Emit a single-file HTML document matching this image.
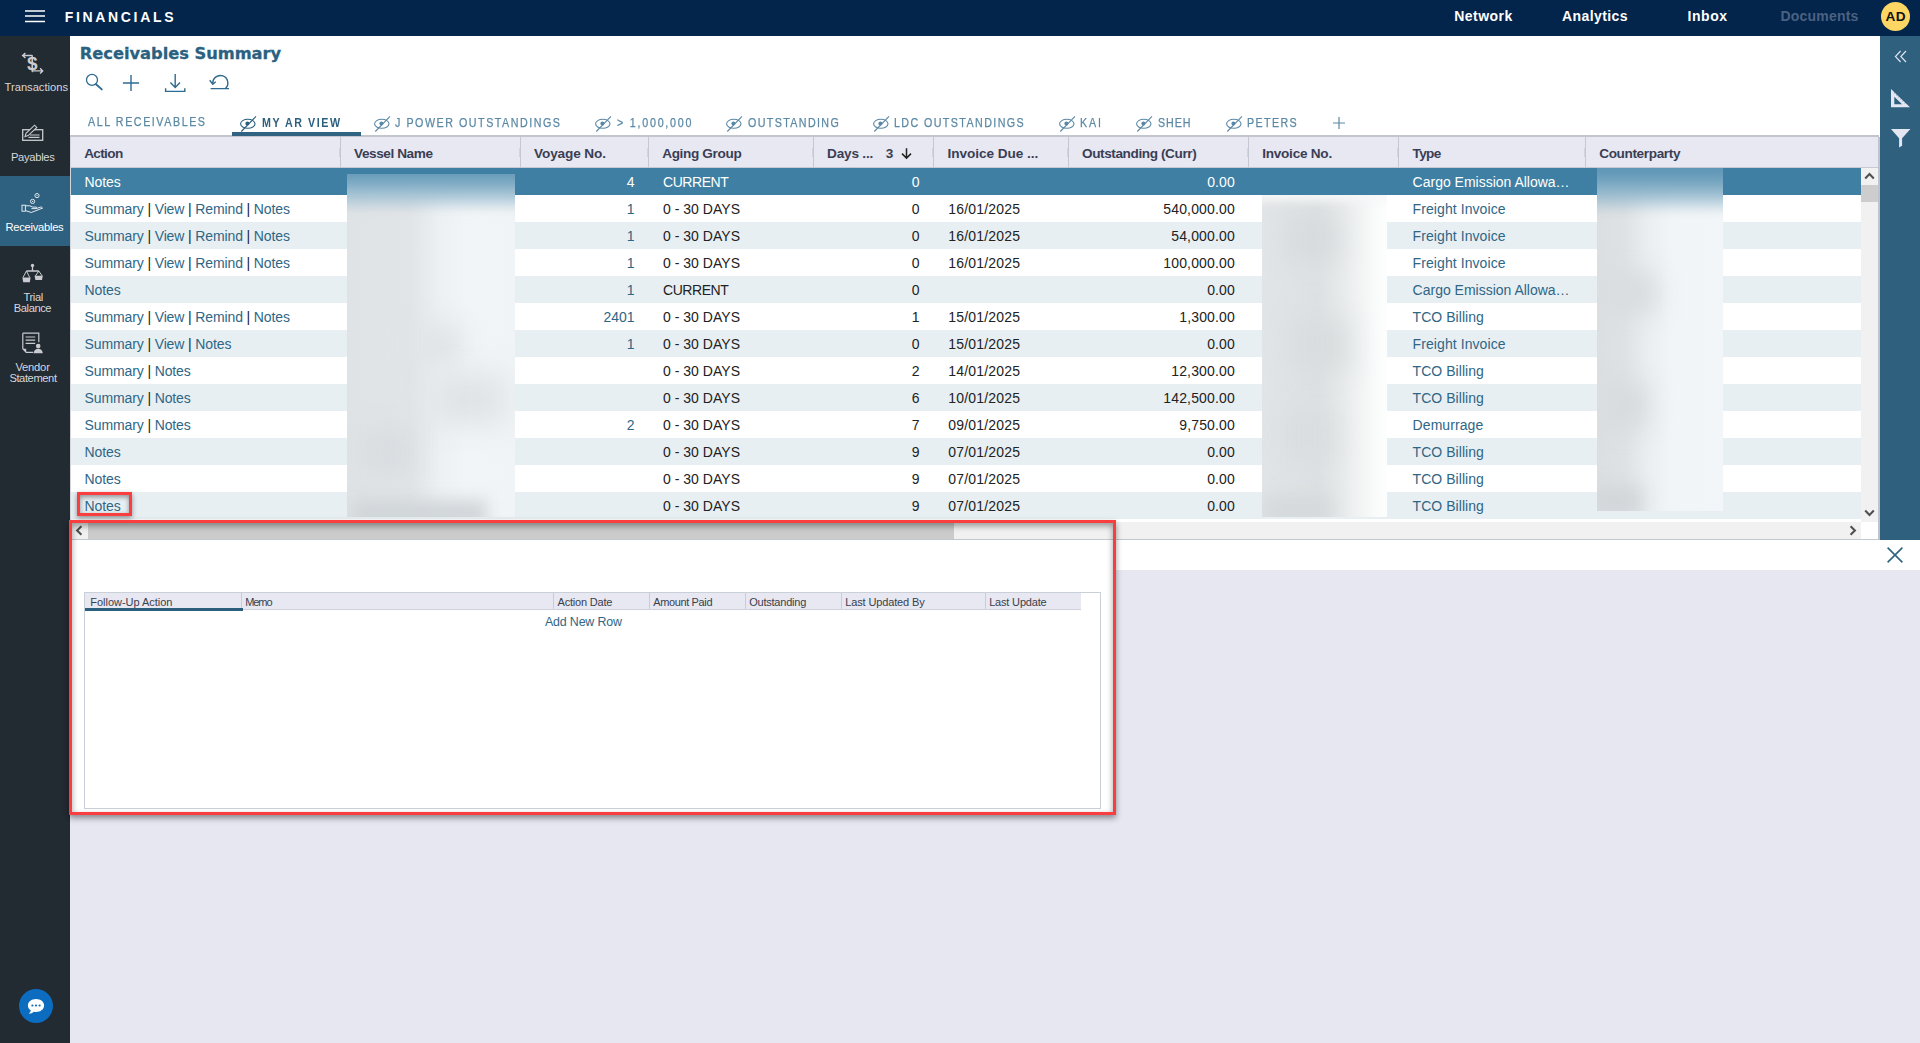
<!DOCTYPE html>
<html lang="en">
<head>
<meta charset="utf-8">
<title>Receivables Summary</title>
<style>
*{box-sizing:border-box;margin:0;padding:0}
html,body{width:1920px;height:1043px;overflow:hidden;background:#e6e7f1;font-family:"Liberation Sans",Arial,sans-serif;}
body{position:relative}
.t{position:absolute;white-space:pre;line-height:1}
.b{position:absolute}
svg{position:absolute;overflow:visible}
/* top bar */
#top{position:absolute;left:0;top:0;width:1920px;height:36px;background:#03244b}
#avatar{position:absolute;left:1881px;top:2px;width:28px;height:28px;border-radius:50%;background:#fdd663}
/* sidebar */
#side{position:absolute;left:0;top:36px;width:70px;height:1007px;background:#222a32}
#sideact{position:absolute;left:0;top:176px;width:70px;height:70px;background:#2e617f}
/* main */
#main{position:absolute;left:70px;top:36px;width:1810px;height:504px;background:#fff}
/* grid */
#gridtop{position:absolute;left:70px;top:135px;width:1809px;height:2px;background:#c3c5cd}
#ghead{position:absolute;left:70px;top:137px;width:1809px;height:31px;background:#e7e8f1;border-bottom:1px solid #c6c9d1;border-left:1px solid #cfd2da;border-right:1px solid #c3c5cd}
.hs{position:absolute;top:137px;width:1px;height:30px;background:#c5c8d2}
.hs2{position:absolute;top:148px;width:1.4px;height:9px;background:#d3d5de}
.r{position:absolute;left:71px;width:1790px;height:27px;background:#fff}
.r.alt{background:#e8eff3}
.r.sel{background:#3e7fa3}
/* right panel */
#right{position:absolute;left:1880px;top:36px;width:40px;height:504px;background:#2f617e}
/* lower */
#lower{position:absolute;left:70px;top:540px;width:1850px;height:30px;background:#fff}
</style>
</head>
<body>
<div id="top"></div>
<svg style="left:25px;top:10px" width="20" height="14" viewBox="0 0 20 14"><path d="M0 0.9h20M0 6.1h20M0 11.4h20" stroke="#fff" stroke-width="1.5" fill="none"/></svg>
<div class="t" style="top:10.35px;font-size:14px;color:#fff;font-weight:bold;letter-spacing:2.669px;left:64.7px;">FINANCIALS</div>
<div class="t" style="top:9.45px;font-size:14px;color:#fff;font-weight:bold;letter-spacing:0.461px;left:1454.3px;">Network</div>
<div class="t" style="top:9.45px;font-size:14px;color:#fff;font-weight:bold;letter-spacing:0.419px;left:1562px;">Analytics</div>
<div class="t" style="top:9.45px;font-size:14px;color:#fff;font-weight:bold;letter-spacing:0.564px;left:1687.5px;">Inbox</div>
<div class="t" style="top:9.45px;font-size:14px;color:#4a6282;font-weight:bold;letter-spacing:0.208px;left:1780.5px;">Documents</div>
<div id="avatar" style="left:1880.5px;top:2px;width:29px;height:29px"></div>
<div class="t" style="top:9.69px;font-size:13.6px;color:#111;font-weight:bold;letter-spacing:0.659px;left:1885.4px;">AD</div>
<div id="side"></div>
<div id="sideact"></div>
<div class="t" style="top:81.52px;font-size:11.2px;color:#d6d8dc;letter-spacing:-0.022px;left:4.6px;">Transactions</div>
<div class="t" style="top:152.02px;font-size:11.2px;color:#d6d8dc;letter-spacing:-0.29px;left:10.9px;">Payables</div>
<div class="t" style="top:222.02px;font-size:11.2px;color:#fff;letter-spacing:-0.265px;left:5.4px;">Receivables</div>
<div class="t" style="top:292.02px;font-size:11.2px;color:#d6d8dc;letter-spacing:-0.411px;left:23.5px;">Trial</div>
<div class="t" style="top:303.02px;font-size:11.2px;color:#d6d8dc;letter-spacing:-0.44px;left:13.8px;">Balance</div>
<div class="t" style="top:362.02px;font-size:11.2px;color:#d6d8dc;letter-spacing:-0.194px;left:15.4px;">Vendor</div>
<div class="t" style="top:373.02px;font-size:11.2px;color:#d6d8dc;letter-spacing:-0.425px;left:9.4px;">Statement</div>
<svg style="left:22px;top:52px" width="22" height="22" viewBox="0 0 22 22"><text x="4.9" y="17.9" style="font:bold 19px 'Liberation Sans',sans-serif" fill="#c9cbd0">$</text><path d="M0.6 3.5H10.3M3.4 0.9L0.6 3.5L3.4 6.1M10.25 3.2V19.4" stroke="#c9cbd0" stroke-width="1.4" fill="none"/><path d="M10.3 18.9H20.7M18.1 16.3L20.7 18.9L18.1 21.5" stroke="#c9cbd0" stroke-width="1.4" fill="none"/></svg>
<svg style="left:22px;top:124px" width="22" height="18" viewBox="0 0 22 18"><rect x="0.7" y="5.7" width="20" height="10.6" fill="none" stroke="#c9cbd0" stroke-width="1.3"/><path d="M8 11h9.6M6.5 13.4h11" stroke="#c9cbd0" stroke-width="1.1" fill="none"/><path d="M3 12.6l1-3.2l8.6-8.2l2.2 2.2l-8.6 8.2z" fill="#222a32" stroke="#c9cbd0" stroke-width="1.1"/></svg>
<svg style="left:21px;top:192px" width="23" height="22" viewBox="0 0 23 22"><circle cx="16" cy="3.6" r="2.1" fill="none" stroke="#e3e8ee" stroke-width="1"/><circle cx="16" cy="3.6" r="0.6" fill="#e3e8ee"/><circle cx="11.6" cy="9.4" r="2.1" fill="none" stroke="#e3e8ee" stroke-width="1"/><circle cx="11.6" cy="9.4" r="0.6" fill="#e3e8ee"/><rect x="1" y="13.2" width="3.4" height="6" fill="none" stroke="#e3e8ee" stroke-width="1"/><path d="M4.6 13.8h4.2l3 1.3h3.6v1.5h-5M4.6 18.6l5.6 1.9l11.4-4.4l-1.4-1.2l-5 1.7" fill="none" stroke="#e3e8ee" stroke-width="1"/></svg>
<svg style="left:22px;top:263px" width="22" height="20" viewBox="0 0 22 20"><circle cx="10.5" cy="2.4" r="1.7" fill="#c9cbd0"/><path d="M10.5 3v5M4.4 8h12.4" stroke="#c9cbd0" stroke-width="1.3" fill="none"/><path d="M4.4 8L1 14.6M4.4 8l3.4 6.6M16.8 8l-3.4 5M16.8 8l3.4 5" stroke="#c9cbd0" stroke-width="1" fill="none"/><path d="M0.4 14.6h8.2l-0.8 4.6h-6.6z" fill="#c9cbd0"/><path d="M12.6 12.8h8.2l-0.8 4.2h-6.6z" fill="#c9cbd0"/></svg>
<svg style="left:22px;top:332px" width="22" height="22" viewBox="0 0 22 22"><path d="M0.8 1.2h16v9M0.8 1.2v15.6l3.4 3.6h7" fill="none" stroke="#c9cbd0" stroke-width="1.2"/><path d="M0.8 16.8h3.4v3.6z" fill="#c9cbd0"/><path d="M3.6 5h9.6M3.6 8.2h9.6M3.6 11.4h9.6" stroke="#c9cbd0" stroke-width="1.2" fill="none"/><circle cx="16.2" cy="14" r="2.3" fill="#c9cbd0"/><path d="M11.6 21.2c0.6-3.4 2.6-4.4 4.6-4.4s4 1 4.6 4.4z" fill="#c9cbd0"/></svg>
<div id="main"></div>
<div class="t" style="top:46.2px;font-size:16.3px;color:#2a6181;font-weight:bold;font-family:'DejaVu Sans','Liberation Sans',sans-serif;letter-spacing:-0.032px;left:79.8px;-webkit-text-stroke:0.3px #2a6181;">Receivables Summary</div>
<svg style="left:84px;top:72px" width="20" height="20" viewBox="0 0 20 20"><circle cx="8" cy="7.9" r="5.5" fill="none" stroke="#2f6b90" stroke-width="1.3"/><path d="M12 12.2L17.8 17.4" stroke="#2f6b90" stroke-width="1.9" fill="none" stroke-linecap="round"/></svg>
<svg style="left:122px;top:74px" width="18" height="18" viewBox="0 0 18 18"><path d="M9 0.9v16.2M0.9 9h16.2" stroke="#2f6b90" stroke-width="1.4" fill="none"/></svg>
<svg style="left:164px;top:73px" width="22" height="20" viewBox="0 0 22 20"><path d="M11.2 1v13.4M6.4 9.6l4.8 4.9l4.8-4.9M1.6 15.2v3.2h19.2v-3.2" stroke="#2f6b90" stroke-width="1.4" fill="none"/></svg>
<svg style="left:208px;top:73px" width="22" height="18" viewBox="0 0 22 18"><path d="M2.6 15.6H21M17.3 15.6A7.5 7.5 0 1 0 4.9 11M1.7 7.2L4.8 11.2L7.7 8.8" stroke="#2f6b90" stroke-width="1.4" fill="none"/></svg>
<div class="t" style="top:115.79px;font-size:12.3px;color:#5b88a5;letter-spacing:1.795px;left:88px;-webkit-text-stroke:0.25px #5b88a5;transform:scaleX(0.87);transform-origin:0 0;">ALL RECEIVABLES</div>
<svg style="left:239.8px;top:115px" width="17" height="17" viewBox="0 0 17 17"><ellipse cx="7.8" cy="8.8" rx="7.2" ry="4.5" fill="none" stroke="#2a5f7e" stroke-width="1.1"/><circle cx="7.4" cy="8.6" r="2" fill="#2a5f7e"/><path d="M1.3 16.5L16 1.4" stroke="#2a5f7e" stroke-width="1.1" fill="none"/></svg>
<div class="t" style="top:117.39px;font-size:12.3px;color:#2a5f7e;font-weight:bold;letter-spacing:1.762px;left:261.7px;transform:scaleX(0.87);transform-origin:0 0;">MY AR VIEW</div>
<svg style="left:374px;top:115px" width="17" height="17" viewBox="0 0 17 17"><ellipse cx="7.8" cy="8.8" rx="7.2" ry="4.5" fill="none" stroke="#5b88a5" stroke-width="1.1"/><circle cx="7.4" cy="8.6" r="2" fill="#5b88a5"/><path d="M1.3 16.5L16 1.4" stroke="#5b88a5" stroke-width="1.1" fill="none"/></svg>
<div class="t" style="top:117.39px;font-size:12.3px;color:#5b88a5;letter-spacing:1.759px;left:395px;-webkit-text-stroke:0.25px #5b88a5;transform:scaleX(0.87);transform-origin:0 0;">J POWER OUTSTANDINGS</div>
<svg style="left:595px;top:115px" width="17" height="17" viewBox="0 0 17 17"><ellipse cx="7.8" cy="8.8" rx="7.2" ry="4.5" fill="none" stroke="#5b88a5" stroke-width="1.1"/><circle cx="7.4" cy="8.6" r="2" fill="#5b88a5"/><path d="M1.3 16.5L16 1.4" stroke="#5b88a5" stroke-width="1.1" fill="none"/></svg>
<div class="t" style="top:117.39px;font-size:12.3px;color:#5b88a5;letter-spacing:2.032px;left:616.5px;-webkit-text-stroke:0.25px #5b88a5;transform:scaleX(0.87);transform-origin:0 0;">&gt; 1,000,000</div>
<svg style="left:725.8px;top:115px" width="17" height="17" viewBox="0 0 17 17"><ellipse cx="7.8" cy="8.8" rx="7.2" ry="4.5" fill="none" stroke="#5b88a5" stroke-width="1.1"/><circle cx="7.4" cy="8.6" r="2" fill="#5b88a5"/><path d="M1.3 16.5L16 1.4" stroke="#5b88a5" stroke-width="1.1" fill="none"/></svg>
<div class="t" style="top:117.39px;font-size:12.3px;color:#5b88a5;letter-spacing:1.577px;left:747.5px;-webkit-text-stroke:0.25px #5b88a5;transform:scaleX(0.87);transform-origin:0 0;">OUTSTANDING</div>
<svg style="left:873px;top:115px" width="17" height="17" viewBox="0 0 17 17"><ellipse cx="7.8" cy="8.8" rx="7.2" ry="4.5" fill="none" stroke="#5b88a5" stroke-width="1.1"/><circle cx="7.4" cy="8.6" r="2" fill="#5b88a5"/><path d="M1.3 16.5L16 1.4" stroke="#5b88a5" stroke-width="1.1" fill="none"/></svg>
<div class="t" style="top:117.39px;font-size:12.3px;color:#5b88a5;letter-spacing:1.618px;left:894.2px;-webkit-text-stroke:0.25px #5b88a5;transform:scaleX(0.87);transform-origin:0 0;">LDC OUTSTANDINGS</div>
<svg style="left:1058.7px;top:115px" width="17" height="17" viewBox="0 0 17 17"><ellipse cx="7.8" cy="8.8" rx="7.2" ry="4.5" fill="none" stroke="#5b88a5" stroke-width="1.1"/><circle cx="7.4" cy="8.6" r="2" fill="#5b88a5"/><path d="M1.3 16.5L16 1.4" stroke="#5b88a5" stroke-width="1.1" fill="none"/></svg>
<div class="t" style="top:117.39px;font-size:12.3px;color:#5b88a5;letter-spacing:2.155px;left:1080.3px;-webkit-text-stroke:0.25px #5b88a5;transform:scaleX(0.87);transform-origin:0 0;">KAI</div>
<svg style="left:1135.8px;top:115px" width="17" height="17" viewBox="0 0 17 17"><ellipse cx="7.8" cy="8.8" rx="7.2" ry="4.5" fill="none" stroke="#5b88a5" stroke-width="1.1"/><circle cx="7.4" cy="8.6" r="2" fill="#5b88a5"/><path d="M1.3 16.5L16 1.4" stroke="#5b88a5" stroke-width="1.1" fill="none"/></svg>
<div class="t" style="top:117.39px;font-size:12.3px;color:#5b88a5;letter-spacing:1.061px;left:1158.3px;-webkit-text-stroke:0.25px #5b88a5;transform:scaleX(0.87);transform-origin:0 0;">SHEH</div>
<svg style="left:1225.8px;top:115px" width="17" height="17" viewBox="0 0 17 17"><ellipse cx="7.8" cy="8.8" rx="7.2" ry="4.5" fill="none" stroke="#5b88a5" stroke-width="1.1"/><circle cx="7.4" cy="8.6" r="2" fill="#5b88a5"/><path d="M1.3 16.5L16 1.4" stroke="#5b88a5" stroke-width="1.1" fill="none"/></svg>
<div class="t" style="top:117.39px;font-size:12.3px;color:#5b88a5;letter-spacing:1.562px;left:1247.4px;-webkit-text-stroke:0.25px #5b88a5;transform:scaleX(0.87);transform-origin:0 0;">PETERS</div>
<svg style="left:1332.5px;top:116.7px" width="12" height="12" viewBox="0 0 12 12"><path d="M6 0v12M0 6h12" stroke="#5b88a5" stroke-width="1.2" fill="none"/></svg>
<div id="gridtop"></div>
<div id="ghead"></div>
<div class="b" style="left:232px;top:132px;width:129px;height:4px;background:#2f6381"></div>
<div class="hs" style="left:340px"></div>
<div class="hs2" style="left:338.6px"></div>
<div class="hs" style="left:520px"></div>
<div class="hs2" style="left:518.6px"></div>
<div class="hs" style="left:648px"></div>
<div class="hs2" style="left:646.6px"></div>
<div class="hs" style="left:813px"></div>
<div class="hs2" style="left:811.6px"></div>
<div class="hs" style="left:933px"></div>
<div class="hs2" style="left:931.6px"></div>
<div class="hs" style="left:1068px"></div>
<div class="hs2" style="left:1066.6px"></div>
<div class="hs" style="left:1248px"></div>
<div class="hs2" style="left:1246.6px"></div>
<div class="hs" style="left:1398px"></div>
<div class="hs2" style="left:1396.6px"></div>
<div class="hs" style="left:1585px"></div>
<div class="hs2" style="left:1583.6px"></div>
<div class="t" style="top:146.69px;font-size:13.6px;color:#3a3e55;font-weight:bold;letter-spacing:-0.659px;left:84.2px;">Action</div>
<div class="t" style="top:146.69px;font-size:13.6px;color:#3a3e55;font-weight:bold;letter-spacing:-0.414px;left:354px;">Vessel Name</div>
<div class="t" style="top:146.69px;font-size:13.6px;color:#3a3e55;font-weight:bold;letter-spacing:-0.115px;left:534px;">Voyage No.</div>
<div class="t" style="top:146.69px;font-size:13.6px;color:#3a3e55;font-weight:bold;letter-spacing:-0.356px;left:662.2px;">Aging Group</div>
<div class="t" style="top:146.69px;font-size:13.6px;color:#3a3e55;font-weight:bold;letter-spacing:-0.187px;left:827px;">Days ...</div>
<div class="t" style="top:146.69px;font-size:13.6px;color:#3a3e55;font-weight:bold;left:885.8px;">3</div>
<div class="t" style="top:146.69px;font-size:13.6px;color:#3a3e55;font-weight:bold;letter-spacing:-0.043px;left:947.5px;">Invoice Due ...</div>
<div class="t" style="top:146.69px;font-size:13.6px;color:#3a3e55;font-weight:bold;letter-spacing:-0.405px;left:1082px;">Outstanding (Curr)</div>
<div class="t" style="top:146.69px;font-size:13.6px;color:#3a3e55;font-weight:bold;letter-spacing:-0.252px;left:1262.2px;">Invoice No.</div>
<div class="t" style="top:146.69px;font-size:13.6px;color:#3a3e55;font-weight:bold;letter-spacing:-0.64px;left:1412.5px;">Type</div>
<div class="t" style="top:146.69px;font-size:13.6px;color:#3a3e55;font-weight:bold;letter-spacing:-0.369px;left:1599.2px;">Counterparty</div>
<svg style="left:901px;top:148px" width="11" height="11" viewBox="0 0 11 11"><path d="M5.5 0.3v9.6M1 5.6l4.5 4.5l4.5-4.5" stroke="#222" stroke-width="1.5" fill="none"/></svg>
<div class="r sel" style="top:168px"></div>
<div class="t" style="left:84.6px;top:174.85px;font-size:14px;color:#fff;letter-spacing:-0.125px">Notes</div>
<div class="t" style="top:174.85px;font-size:14px;color:#fff;right:1285.4px;">4</div>
<div class="t" style="top:174.85px;font-size:14px;color:#fff;letter-spacing:-0.442px;left:663.0px;">CURRENT</div>
<div class="t" style="top:174.85px;font-size:14px;color:#fff;right:1000.4px;">0</div>
<div class="t" style="top:174.85px;font-size:14px;color:#fff;letter-spacing:0.117px;right:685.08px;">0.00</div>
<div class="t" style="top:174.85px;font-size:14px;color:#fff;letter-spacing:-0.008px;left:1412.6px;">Cargo Emission Allowa…</div>
<div class="r" style="top:195px"></div>
<div class="t" style="left:84.6px;top:201.85px;font-size:14px;color:#2f6685;letter-spacing:-0.125px">Summary <span style="color:#222">|</span> View <span style="color:#222">|</span> Remind <span style="color:#222">|</span> Notes</div>
<div class="t" style="top:201.85px;font-size:14px;color:#2f6685;right:1285.4px;">1</div>
<div class="t" style="top:201.85px;font-size:14px;color:#222;letter-spacing:0.022px;left:663.0px;">0 - 30 DAYS</div>
<div class="t" style="top:201.85px;font-size:14px;color:#222;right:1000.4px;">0</div>
<div class="t" style="top:201.85px;font-size:14px;color:#222;letter-spacing:0.191px;left:948.3px;">16/01/2025</div>
<div class="t" style="top:201.85px;font-size:14px;color:#222;letter-spacing:0.169px;right:685.03px;">540,000.00</div>
<div class="t" style="top:201.85px;font-size:14px;color:#2f6685;letter-spacing:0.077px;left:1412.6px;">Freight Invoice</div>
<div class="r alt" style="top:222px"></div>
<div class="t" style="left:84.6px;top:228.85px;font-size:14px;color:#2f6685;letter-spacing:-0.125px">Summary <span style="color:#222">|</span> View <span style="color:#222">|</span> Remind <span style="color:#222">|</span> Notes</div>
<div class="t" style="top:228.85px;font-size:14px;color:#2f6685;right:1285.4px;">1</div>
<div class="t" style="top:228.85px;font-size:14px;color:#222;letter-spacing:0.022px;left:663.0px;">0 - 30 DAYS</div>
<div class="t" style="top:228.85px;font-size:14px;color:#222;right:1000.4px;">0</div>
<div class="t" style="top:228.85px;font-size:14px;color:#222;letter-spacing:0.191px;left:948.3px;">16/01/2025</div>
<div class="t" style="top:228.85px;font-size:14px;color:#222;letter-spacing:0.163px;right:685.04px;">54,000.00</div>
<div class="t" style="top:228.85px;font-size:14px;color:#2f6685;letter-spacing:0.077px;left:1412.6px;">Freight Invoice</div>
<div class="r" style="top:249px"></div>
<div class="t" style="left:84.6px;top:255.85px;font-size:14px;color:#2f6685;letter-spacing:-0.125px">Summary <span style="color:#222">|</span> View <span style="color:#222">|</span> Remind <span style="color:#222">|</span> Notes</div>
<div class="t" style="top:255.85px;font-size:14px;color:#2f6685;right:1285.4px;">1</div>
<div class="t" style="top:255.85px;font-size:14px;color:#222;letter-spacing:0.022px;left:663.0px;">0 - 30 DAYS</div>
<div class="t" style="top:255.85px;font-size:14px;color:#222;right:1000.4px;">0</div>
<div class="t" style="top:255.85px;font-size:14px;color:#222;letter-spacing:0.191px;left:948.3px;">16/01/2025</div>
<div class="t" style="top:255.85px;font-size:14px;color:#222;letter-spacing:0.169px;right:685.03px;">100,000.00</div>
<div class="t" style="top:255.85px;font-size:14px;color:#2f6685;letter-spacing:0.077px;left:1412.6px;">Freight Invoice</div>
<div class="r alt" style="top:276px"></div>
<div class="t" style="left:84.6px;top:282.85px;font-size:14px;color:#2f6685;letter-spacing:-0.125px">Notes</div>
<div class="t" style="top:282.85px;font-size:14px;color:#2f6685;right:1285.4px;">1</div>
<div class="t" style="top:282.85px;font-size:14px;color:#222;letter-spacing:-0.442px;left:663.0px;">CURRENT</div>
<div class="t" style="top:282.85px;font-size:14px;color:#222;right:1000.4px;">0</div>
<div class="t" style="top:282.85px;font-size:14px;color:#222;letter-spacing:0.117px;right:685.08px;">0.00</div>
<div class="t" style="top:282.85px;font-size:14px;color:#2f6685;letter-spacing:-0.008px;left:1412.6px;">Cargo Emission Allowa…</div>
<div class="r" style="top:303px"></div>
<div class="t" style="left:84.6px;top:309.85px;font-size:14px;color:#2f6685;letter-spacing:-0.125px">Summary <span style="color:#222">|</span> View <span style="color:#222">|</span> Remind <span style="color:#222">|</span> Notes</div>
<div class="t" style="top:309.85px;font-size:14px;color:#2f6685;right:1285.4px;">2401</div>
<div class="t" style="top:309.85px;font-size:14px;color:#222;letter-spacing:0.022px;left:663.0px;">0 - 30 DAYS</div>
<div class="t" style="top:309.85px;font-size:14px;color:#222;right:1000.4px;">1</div>
<div class="t" style="top:309.85px;font-size:14px;color:#222;letter-spacing:0.191px;left:948.3px;">15/01/2025</div>
<div class="t" style="top:309.85px;font-size:14px;color:#222;letter-spacing:0.157px;right:685.04px;">1,300.00</div>
<div class="t" style="top:309.85px;font-size:14px;color:#2f6685;letter-spacing:0.05px;left:1412.6px;">TCO Billing</div>
<div class="r alt" style="top:330px"></div>
<div class="t" style="left:84.6px;top:336.85px;font-size:14px;color:#2f6685;letter-spacing:-0.125px">Summary <span style="color:#222">|</span> View <span style="color:#222">|</span> Notes</div>
<div class="t" style="top:336.85px;font-size:14px;color:#2f6685;right:1285.4px;">1</div>
<div class="t" style="top:336.85px;font-size:14px;color:#222;letter-spacing:0.022px;left:663.0px;">0 - 30 DAYS</div>
<div class="t" style="top:336.85px;font-size:14px;color:#222;right:1000.4px;">0</div>
<div class="t" style="top:336.85px;font-size:14px;color:#222;letter-spacing:0.191px;left:948.3px;">15/01/2025</div>
<div class="t" style="top:336.85px;font-size:14px;color:#222;letter-spacing:0.117px;right:685.08px;">0.00</div>
<div class="t" style="top:336.85px;font-size:14px;color:#2f6685;letter-spacing:0.077px;left:1412.6px;">Freight Invoice</div>
<div class="r" style="top:357px"></div>
<div class="t" style="left:84.6px;top:363.85px;font-size:14px;color:#2f6685;letter-spacing:-0.125px">Summary <span style="color:#222">|</span> Notes</div>
<div class="t" style="top:363.85px;font-size:14px;color:#222;letter-spacing:0.022px;left:663.0px;">0 - 30 DAYS</div>
<div class="t" style="top:363.85px;font-size:14px;color:#222;right:1000.4px;">2</div>
<div class="t" style="top:363.85px;font-size:14px;color:#222;letter-spacing:0.191px;left:948.3px;">14/01/2025</div>
<div class="t" style="top:363.85px;font-size:14px;color:#222;letter-spacing:0.163px;right:685.04px;">12,300.00</div>
<div class="t" style="top:363.85px;font-size:14px;color:#2f6685;letter-spacing:0.05px;left:1412.6px;">TCO Billing</div>
<div class="r alt" style="top:384px"></div>
<div class="t" style="left:84.6px;top:390.85px;font-size:14px;color:#2f6685;letter-spacing:-0.125px">Summary <span style="color:#222">|</span> Notes</div>
<div class="t" style="top:390.85px;font-size:14px;color:#222;letter-spacing:0.022px;left:663.0px;">0 - 30 DAYS</div>
<div class="t" style="top:390.85px;font-size:14px;color:#222;right:1000.4px;">6</div>
<div class="t" style="top:390.85px;font-size:14px;color:#222;letter-spacing:0.191px;left:948.3px;">10/01/2025</div>
<div class="t" style="top:390.85px;font-size:14px;color:#222;letter-spacing:0.169px;right:685.03px;">142,500.00</div>
<div class="t" style="top:390.85px;font-size:14px;color:#2f6685;letter-spacing:0.05px;left:1412.6px;">TCO Billing</div>
<div class="r" style="top:411px"></div>
<div class="t" style="left:84.6px;top:417.85px;font-size:14px;color:#2f6685;letter-spacing:-0.125px">Summary <span style="color:#222">|</span> Notes</div>
<div class="t" style="top:417.85px;font-size:14px;color:#2f6685;right:1285.4px;">2</div>
<div class="t" style="top:417.85px;font-size:14px;color:#222;letter-spacing:0.022px;left:663.0px;">0 - 30 DAYS</div>
<div class="t" style="top:417.85px;font-size:14px;color:#222;right:1000.4px;">7</div>
<div class="t" style="top:417.85px;font-size:14px;color:#222;letter-spacing:0.191px;left:948.3px;">09/01/2025</div>
<div class="t" style="top:417.85px;font-size:14px;color:#222;letter-spacing:0.157px;right:685.04px;">9,750.00</div>
<div class="t" style="top:417.85px;font-size:14px;color:#2f6685;letter-spacing:0.071px;left:1412.6px;">Demurrage</div>
<div class="r alt" style="top:438px"></div>
<div class="t" style="left:84.6px;top:444.85px;font-size:14px;color:#2f6685;letter-spacing:-0.125px">Notes</div>
<div class="t" style="top:444.85px;font-size:14px;color:#222;letter-spacing:0.022px;left:663.0px;">0 - 30 DAYS</div>
<div class="t" style="top:444.85px;font-size:14px;color:#222;right:1000.4px;">9</div>
<div class="t" style="top:444.85px;font-size:14px;color:#222;letter-spacing:0.191px;left:948.3px;">07/01/2025</div>
<div class="t" style="top:444.85px;font-size:14px;color:#222;letter-spacing:0.117px;right:685.08px;">0.00</div>
<div class="t" style="top:444.85px;font-size:14px;color:#2f6685;letter-spacing:0.05px;left:1412.6px;">TCO Billing</div>
<div class="r" style="top:465px"></div>
<div class="t" style="left:84.6px;top:471.85px;font-size:14px;color:#2f6685;letter-spacing:-0.125px">Notes</div>
<div class="t" style="top:471.85px;font-size:14px;color:#222;letter-spacing:0.022px;left:663.0px;">0 - 30 DAYS</div>
<div class="t" style="top:471.85px;font-size:14px;color:#222;right:1000.4px;">9</div>
<div class="t" style="top:471.85px;font-size:14px;color:#222;letter-spacing:0.191px;left:948.3px;">07/01/2025</div>
<div class="t" style="top:471.85px;font-size:14px;color:#222;letter-spacing:0.117px;right:685.08px;">0.00</div>
<div class="t" style="top:471.85px;font-size:14px;color:#2f6685;letter-spacing:0.05px;left:1412.6px;">TCO Billing</div>
<div class="r alt" style="top:492px"></div>
<div class="t" style="left:84.6px;top:498.85px;font-size:14px;color:#2f6685;letter-spacing:-0.125px">Notes</div>
<div class="t" style="top:498.85px;font-size:14px;color:#222;letter-spacing:0.022px;left:663.0px;">0 - 30 DAYS</div>
<div class="t" style="top:498.85px;font-size:14px;color:#222;right:1000.4px;">9</div>
<div class="t" style="top:498.85px;font-size:14px;color:#222;letter-spacing:0.191px;left:948.3px;">07/01/2025</div>
<div class="t" style="top:498.85px;font-size:14px;color:#222;letter-spacing:0.117px;right:685.08px;">0.00</div>
<div class="t" style="top:498.85px;font-size:14px;color:#2f6685;letter-spacing:0.05px;left:1412.6px;">TCO Billing</div>
<div class="b" style="left:347px;top:174px;width:168px;height:343px;overflow:hidden;background:linear-gradient(to right,#dfe3e5 0,#e1e5e7 38%,#edf1f3 56%,#f2f5f7 72%,#f1f4f6 100%)"><div class="b" style="left:70px;top:150px;width:45px;height:40px;background:#e0e4e6;filter:blur(13px)"></div><div class="b" style="left:85px;top:200px;width:75px;height:50px;background:#dfe3e5;filter:blur(15px)"></div><div class="b" style="left:15px;top:255px;width:50px;height:45px;background:#d9dde0;filter:blur(13px)"></div><div class="b" style="left:5px;top:326px;width:135px;height:26px;background:#d0d5d8;filter:blur(8px)"></div><div class="b" style="left:-20px;top:-14px;width:208px;height:52px;background:linear-gradient(to bottom,#5f97b6 0,#6a9dbb 16px,#9cbed1 32px,rgba(222,232,238,0) 52px);filter:blur(4px)"></div></div>
<div class="b" style="left:1262px;top:195px;width:125px;height:322px;overflow:hidden;background:linear-gradient(to right,#e2e5e7 0,#dee1e3 45%,#e9eced 66%,#f8f9f9 88%,#fdfefe 100%)"><div class="b" style="left:25px;top:20px;width:50px;height:45px;background:#d7dbdd;filter:blur(13px)"></div><div class="b" style="left:30px;top:125px;width:55px;height:50px;background:#d8dcde;filter:blur(14px)"></div><div class="b" style="left:20px;top:215px;width:50px;height:50px;background:#d9dddf;filter:blur(14px)"></div><div class="b" style="left:0px;top:300px;width:70px;height:30px;background:#d5d9db;filter:blur(9px)"></div><div class="b" style="left:-10px;top:-12px;width:145px;height:18px;background:#f6f7f8;filter:blur(5px)"></div></div>
<div class="b" style="left:1597px;top:168px;width:126px;height:343px;overflow:hidden;background:linear-gradient(to right,#dcdfe1 0,#dfe2e4 22%,#ebeff1 42%,#f2f5f7 60%,#f3f6f8 100%)"><div class="b" style="left:10px;top:105px;width:50px;height:40px;background:#d9dcdf;filter:blur(12px)"></div><div class="b" style="left:5px;top:215px;width:45px;height:45px;background:#d8dbde;filter:blur(12px)"></div><div class="b" style="left:-5px;top:318px;width:50px;height:30px;background:#d2d6d9;filter:blur(9px)"></div><div class="b" style="left:-20px;top:-14px;width:166px;height:60px;background:linear-gradient(to bottom,#5f97b6 0,#5f97b6 18px,#8db4ca 36px,rgba(225,235,240,0) 60px);filter:blur(4px)"></div></div>
<div class="b" style="left:1861px;top:168px;width:17px;height:354px;background:#f1f1f1"></div>
<div class="b" style="left:1861px;top:185px;width:17px;height:17px;background:#cdcdcd"></div>
<svg style="left:1864px;top:172px" width="11" height="8" viewBox="0 0 11 8"><path d="M1.2 6.4l4.3-4.3l4.3 4.3" stroke="#505050" stroke-width="2.1" fill="none"/></svg>
<svg style="left:1864px;top:509px" width="11" height="8" viewBox="0 0 11 8"><path d="M1.2 1.6l4.3 4.3l4.3-4.3" stroke="#505050" stroke-width="2.1" fill="none"/></svg>
<div class="b" style="left:71px;top:522px;width:1790px;height:17px;background:#f1f1f1"></div>
<div class="b" style="left:88px;top:522px;width:866px;height:17px;background:#cbcbcb"></div>
<svg style="left:75px;top:525px" width="8" height="11" viewBox="0 0 8 11"><path d="M6.4 1.2l-4.3 4.3l4.3 4.3" stroke="#505050" stroke-width="2.1" fill="none"/></svg>
<svg style="left:1849px;top:525px" width="8" height="11" viewBox="0 0 8 11"><path d="M1.6 1.2l4.3 4.3l-4.3 4.3" stroke="#505050" stroke-width="2.1" fill="none"/></svg>
<div class="b" style="left:1861px;top:522px;width:17px;height:17px;background:#fff"></div>
<div class="b" style="left:70px;top:539px;width:1809px;height:1px;background:#c3c8cf"></div>
<div class="b" style="left:70px;top:137px;width:1px;height:403px;background:#d3d6dc"></div>
<div class="b" style="left:1878px;top:137px;width:2px;height:403px;background:#bfc3cd"></div>
<div id="right"></div>
<svg style="left:1894px;top:50px" width="14" height="13" viewBox="0 0 14 13"><path d="M6.6 1L1.4 6.5L6.6 12M12 1L6.8 6.5L12 12" stroke="#e4e6f1" stroke-width="1.1" fill="none"/></svg>
<svg style="left:1891px;top:89px" width="19" height="19" viewBox="0 0 19 19"><path fill-rule="evenodd" d="M0 0L19 18.3H0zM3.3 7.8v7.4h7.8z" fill="#e4e6f1"/><path d="M3.2 4.2l1.4-1M5.3 6.2l1.4-1M7.4 8.2l1.4-1M9.5 10.2l1.4-1M11.6 12.2l1.4-1M13.7 14.2l1.4-1" stroke="#2f617e" stroke-width="0.8"/></svg>
<svg style="left:1890.8px;top:129px" width="20" height="19" viewBox="0 0 20 19"><path d="M0 0h19.4l-8.3 9.2v7.6l-3 1.6v-9.2z" fill="#e4e6f1"/></svg>
<div id="lower"></div>
<svg style="left:1887px;top:547px" width="16" height="16" viewBox="0 0 16 16"><path d="M0.6 0.6l14.8 14.8M15.4 0.6L0.6 15.4" stroke="#2d6482" stroke-width="1.6" fill="none"/></svg>
<div class="b" style="left:70px;top:540px;width:1044px;height:272px;background:#fff"></div>
<div class="b" style="left:84px;top:592px;width:1017px;height:217px;background:#fff;border:1px solid #c9d0d8"></div>
<div class="b" style="left:85px;top:593px;width:996px;height:17px;background:#e7e8f1;border-bottom:1px solid #cfd2dc"></div>
<div class="b" style="left:241px;top:593px;width:1px;height:16px;background:#c9ccd6"></div>
<div class="b" style="left:553px;top:593px;width:1px;height:16px;background:#c9ccd6"></div>
<div class="b" style="left:649px;top:593px;width:1px;height:16px;background:#c9ccd6"></div>
<div class="b" style="left:745px;top:593px;width:1px;height:16px;background:#c9ccd6"></div>
<div class="b" style="left:841px;top:593px;width:1px;height:16px;background:#c9ccd6"></div>
<div class="b" style="left:985px;top:593px;width:1px;height:16px;background:#c9ccd6"></div>
<div class="b" style="left:85px;top:608px;width:158px;height:3px;background:#2a5f7e"></div>
<div class="t" style="top:597.29px;font-size:11px;color:#3a3e4c;letter-spacing:-0.023px;left:90.3px;">Follow-Up Action</div>
<div class="t" style="top:597.29px;font-size:11px;color:#3a3e4c;letter-spacing:-1.121px;left:245.3px;">Memo</div>
<div class="t" style="top:597.29px;font-size:11px;color:#3a3e4c;letter-spacing:-0.188px;left:557.5px;">Action Date</div>
<div class="t" style="top:597.29px;font-size:11px;color:#3a3e4c;letter-spacing:-0.378px;left:653.3px;">Amount Paid</div>
<div class="t" style="top:597.29px;font-size:11px;color:#3a3e4c;letter-spacing:-0.223px;left:749.2px;">Outstanding</div>
<div class="t" style="top:597.29px;font-size:11px;color:#3a3e4c;letter-spacing:-0.139px;left:845.3px;">Last Updated By</div>
<div class="t" style="top:597.29px;font-size:11px;color:#3a3e4c;letter-spacing:-0.183px;left:989.2px;">Last Update</div>
<div class="t" style="top:616.1px;font-size:12.4px;color:#2f6685;letter-spacing:-0.162px;left:545px;">Add New Row</div>
<div class="b" style="left:77px;top:492px;width:55px;height:24px;border:3px solid #fa3d3f;box-shadow:0 2px 5px rgba(0,0,0,.4),inset 0 2px 5px rgba(0,0,0,.4)"></div>
<div class="b" style="left:69px;top:520px;width:1047px;height:295px;border:3px solid #fa3d3f;box-shadow:0 3px 6px rgba(0,0,0,.42),inset 0 3px 6px rgba(0,0,0,.38)"></div>
<div class="b" style="left:19px;top:989px;width:34px;height:34px;border-radius:50%;background:#0b6cc0"></div><svg style="left:27px;top:998px" width="18" height="17" viewBox="0 0 18 17"><path d="M9 1C4.4 1 0.9 3.9 0.9 7.4c0 2 1.1 3.7 2.9 4.9c-0.2 1.3-1 2.5-2.2 3.3c2.1 0.1 3.9-0.6 5.2-1.9c0.7 0.1 1.4 0.2 2.2 0.2c4.600 0 8.100-2.900 8.100-6.500S13.600 1 9 1z" fill="#fff"/><circle cx="5.4" cy="7.5" r="1.1" fill="#0b6cc0"/><circle cx="9" cy="7.5" r="1.1" fill="#0b6cc0"/><circle cx="12.600" cy="7.5" r="1.1" fill="#0b6cc0"/></svg>
</body>
</html>
